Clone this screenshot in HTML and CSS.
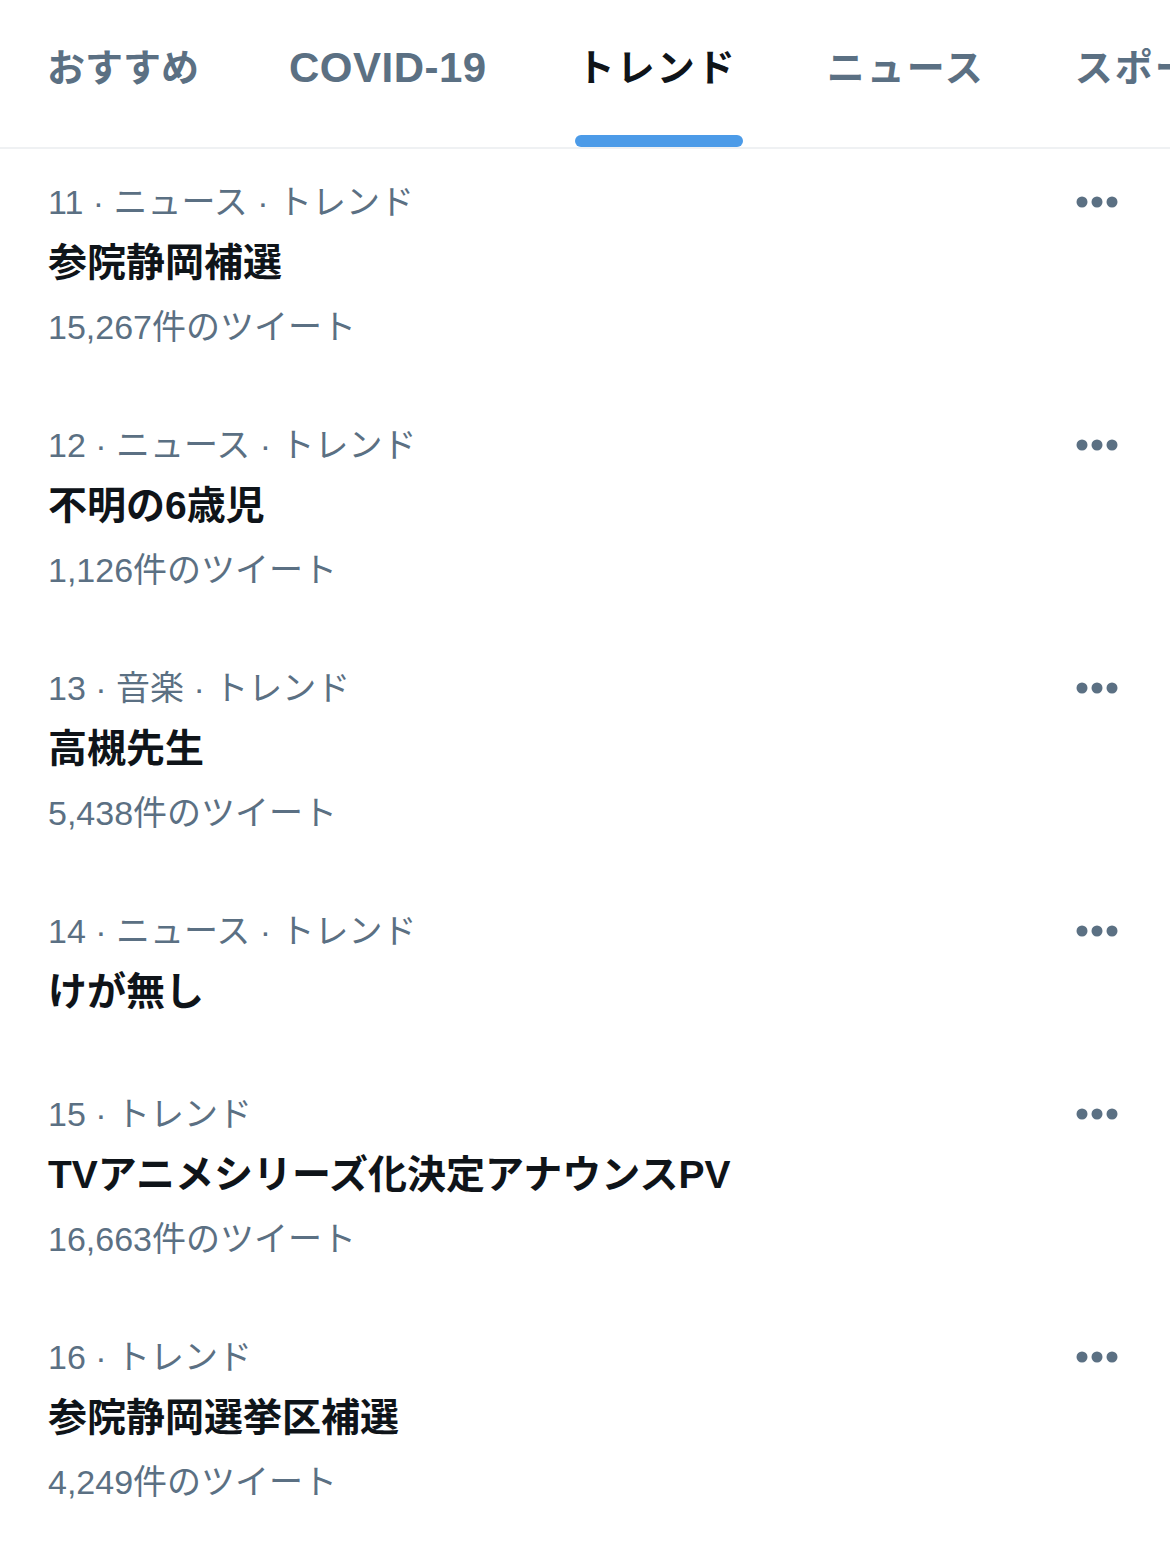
FILE: index.html
```html
<!DOCTYPE html>
<html lang="ja">

<head>
    <meta charset="UTF-8">
    <meta name="viewport" content="width=device-width, initial-scale=1.0">
    <title>トレンド</title>
    <link rel="stylesheet" href="styles.css">
</head>

<body>

    <!-- Tabs -->
    <nav class="tabs">
        <div class="tab"><span class="tab-label">おすすめ</span><span class="tab-bar"></span></div>
        <div class="tab"><span class="tab-label latin">COVID-19</span><span class="tab-bar"></span></div>
        <div class="tab active"><span class="tab-label kana">トレンド</span><span class="tab-bar"></span></div>
        <div class="tab"><span class="tab-label kana">ニュース</span><span class="tab-bar"></span></div>
        <div class="tab"><span class="tab-label kana">スポーツ</span><span class="tab-bar"></span></div>
    </nav>

    <!-- Trend list -->
    <section class="trends">
        <div class="trend">
            <div class="trend-meta">
                <span>11 · ニュース · トレンド</span>
                <svg class="more" width="42" height="12" viewBox="0 0 42 12"><circle cx="6" cy="6" r="5.5"/><circle cx="21" cy="6" r="5.5"/><circle cx="36" cy="6" r="5.5"/></svg>
            </div>
            <h3>参院静岡補選</h3>
            <p>15,267件のツイート</p>
        </div>

        <div class="trend">
            <div class="trend-meta">
                <span>12 · ニュース · トレンド</span>
                <svg class="more" width="42" height="12" viewBox="0 0 42 12"><circle cx="6" cy="6" r="5.5"/><circle cx="21" cy="6" r="5.5"/><circle cx="36" cy="6" r="5.5"/></svg>
            </div>
            <h3>不明の6歳児</h3>
            <p>1,126件のツイート</p>
        </div>

        <div class="trend">
            <div class="trend-meta">
                <span>13 · 音楽 · トレンド</span>
                <svg class="more" width="42" height="12" viewBox="0 0 42 12"><circle cx="6" cy="6" r="5.5"/><circle cx="21" cy="6" r="5.5"/><circle cx="36" cy="6" r="5.5"/></svg>
            </div>
            <h3>高槻先生</h3>
            <p>5,438件のツイート</p>
        </div>

        <div class="trend">
            <div class="trend-meta">
                <span>14 · ニュース · トレンド</span>
                <svg class="more" width="42" height="12" viewBox="0 0 42 12"><circle cx="6" cy="6" r="5.5"/><circle cx="21" cy="6" r="5.5"/><circle cx="36" cy="6" r="5.5"/></svg>
            </div>
            <h3>けが無し</h3>
        </div>

        <div class="trend">
            <div class="trend-meta">
                <span>15 · トレンド</span>
                <svg class="more" width="42" height="12" viewBox="0 0 42 12"><circle cx="6" cy="6" r="5.5"/><circle cx="21" cy="6" r="5.5"/><circle cx="36" cy="6" r="5.5"/></svg>
            </div>
            <h3>TVアニメシリーズ化決定アナウンスPV</h3>
            <p>16,663件のツイート</p>
        </div>

        <div class="trend">
            <div class="trend-meta">
                <span>16 · トレンド</span>
                <svg class="more" width="42" height="12" viewBox="0 0 42 12"><circle cx="6" cy="6" r="5.5"/><circle cx="21" cy="6" r="5.5"/><circle cx="36" cy="6" r="5.5"/></svg>
            </div>
            <h3>参院静岡選挙区補選</h3>
            <p>4,249件のツイート</p>
        </div>
    </section>

</body>

</html>
```

FILE: styles.css
```css
/* Basic Reset */
body,
h3,
p {
    margin: 0;
    padding: 0;
    font-family: 'Liberation Sans', 'Noto Sans CJK JP', sans-serif;
}

body {
    background-color: #fff;
    overflow: hidden;
}

/* Tabs */
.tabs {
    display: flex;
    gap: 90px;
    padding: 40px 0 0 47px;
    border-bottom: 2px solid #eff1f3;
    white-space: nowrap;
    overflow: hidden;
}

.tab {
    display: flex;
    flex-direction: column;
    flex-shrink: 0;
}

.tab-label {
    font-size: 38px;
    line-height: 56px;
    font-weight: bold;
    color: #5b7083;
}

.tab-label.latin {
    font-size: 42px;
    letter-spacing: 0.5px;
}

.tab-label.kana {
    letter-spacing: 2px;
}

.tab-bar {
    height: 12px;
    margin: 39px -6px 0 -2px;
    border-radius: 6px;
}

.tab.active .tab-label {
    color: #0f1419;
}

.tab.active .tab-bar {
    background-color: #4c9be8;
}

/* Trends */
.trend {
    padding: 31px 52px 43px 48px;
}

.trend-meta {
    display: flex;
    justify-content: space-between;
    align-items: center;
    font-size: 34px;
    line-height: 44px;
    color: #5b7083;
}

.more {
    fill: #5b7083;
}

.trend h3 {
    margin-top: 13px;
    font-size: 39px;
    line-height: 52px;
    font-weight: bold;
    color: #0f1419;
}

.trend p {
    margin-top: 16px;
    font-size: 34px;
    line-height: 44px;
    color: #5b7083;
}
```
